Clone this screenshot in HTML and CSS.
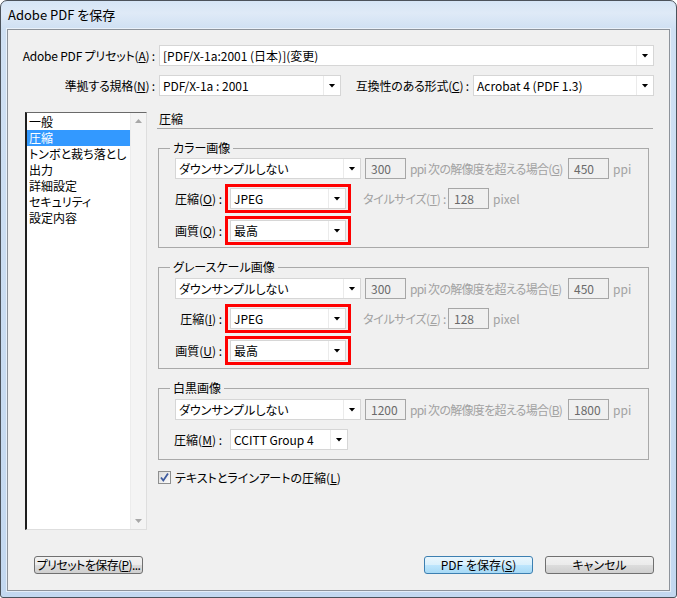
FILE: index.html
```html
<!DOCTYPE html>
<html lang="ja">
<head>
<meta charset="utf-8">
<title>Adobe PDF を保存</title>
<link rel="stylesheet" href="styles.css">
</head>
<body>
<div class="window">
  <div class="titlebar">Adobe PDF を保存</div>
  <div class="panel">
    <div class="trow">
      <div class="tlabel">Adobe PDF プリセット(<u>A</u>) :</div>
      <div class="combo c-preset"><span class="v">[PDF/X-1a:2001 (日本)](変更)</span><span class="a"></span></div>
    </div>
    <div class="trow trow2">
      <div class="tlabel">準拠する規格(<u>N</u>) :</div>
      <div class="combo c-std"><span class="v">PDF/X-1a : 2001</span><span class="a"></span></div>
      <div class="tlabel tlabel2">互換性のある形式(<u>C</u>) :</div>
      <div class="combo c-compat"><span class="v">Acrobat 4 (PDF 1.3)</span><span class="a"></span></div>
    </div>

    <div class="main">
      <div class="list">
        <ul class="items">
          <li>一般</li>
          <li class="sel">圧縮</li>
          <li>トンボと裁ち落とし</li>
          <li>出力</li>
          <li>詳細設定</li>
          <li>セキュリティ</li>
          <li>設定内容</li>
        </ul>
        <div class="sbar"><span class="sarr up"></span><span class="sarr down"></span></div>
      </div>

      <div class="content">
        <div class="chead">圧縮</div>

        <fieldset class="group g-color">
          <legend>カラー画像</legend>
          <div class="gbody">
            <div class="grow">
              <div class="combo c-ds"><span class="v">ダウンサンプルしない</span><span class="a"></span></div>
              <div class="num n1">300</div>
              <div class="dis dtext">ppi 次の解像度を超える場合(<u>G</u>)</div>
              <div class="num">450</div>
              <div class="dis ppi">ppi</div>
            </div>
            <div class="grow r2">
              <div class="glbl">圧縮(<u>O</u>) :</div>
              <div class="red"><div class="combo"><span class="v">JPEG</span><span class="a"></span></div></div>
              <div class="dis tlbl">タイルサイズ(<u>T</u>) :</div>
              <div class="num">128</div>
              <div class="dis ppi">pixel</div>
            </div>
            <div class="grow r3">
              <div class="glbl">画質(<u>Q</u>) :</div>
              <div class="red"><div class="combo"><span class="v">最高</span><span class="a"></span></div></div>
            </div>
          </div>
        </fieldset>

        <fieldset class="group g-gray">
          <legend>グレースケール画像</legend>
          <div class="gbody">
            <div class="grow">
              <div class="combo c-ds"><span class="v">ダウンサンプルしない</span><span class="a"></span></div>
              <div class="num n1">300</div>
              <div class="dis dtext">ppi 次の解像度を超える場合(<u>E</u>)</div>
              <div class="num">450</div>
              <div class="dis ppi">ppi</div>
            </div>
            <div class="grow r2">
              <div class="glbl">圧縮(<u>I</u>) :</div>
              <div class="red"><div class="combo"><span class="v">JPEG</span><span class="a"></span></div></div>
              <div class="dis tlbl">タイルサイズ(<u>Z</u>) :</div>
              <div class="num">128</div>
              <div class="dis ppi">pixel</div>
            </div>
            <div class="grow r3">
              <div class="glbl">画質(<u>U</u>) :</div>
              <div class="red"><div class="combo"><span class="v">最高</span><span class="a"></span></div></div>
            </div>
          </div>
        </fieldset>

        <fieldset class="group g-mono">
          <legend>白黒画像</legend>
          <div class="gbody">
            <div class="grow">
              <div class="combo c-ds"><span class="v">ダウンサンプルしない</span><span class="a"></span></div>
              <div class="num n1">1200</div>
              <div class="dis dtext">ppi 次の解像度を超える場合(<u>B</u>)</div>
              <div class="num">1800</div>
              <div class="dis ppi">ppi</div>
            </div>
            <div class="grow r2m">
              <div class="glbl">圧縮(<u>M</u>) :</div>
              <div class="combo c-mono"><span class="v">CCITT Group 4</span><span class="a"></span></div>
            </div>
          </div>
        </fieldset>

        <div class="chk">
          <span class="box"><svg width="11" height="11" viewBox="0 0 11 11"><path d="M2 5.5 L4.3 8.5 L9 1.5" fill="none" stroke="#3d5a9e" stroke-width="1.8"/></svg></span>
          <span class="ctext">テキストとラインアートの圧縮(<u>L</u>)</span>
        </div>
      </div>
    </div>

    <div class="btns">
      <button class="btn b-preset">プリセットを保存(<u>P</u>)...</button>
      <span class="spacer"></span>
      <button class="btn default">PDF を保存(<u>S</u>)</button>
      <button class="btn b-cancel">キャンセル</button>
    </div>
  </div>
</div>
</body>
</html>
```

FILE: styles.css
```css
html, body {
  margin: 0;
  padding: 0;
  background: #ffffff;
}

body {
  font-family: "Noto Sans CJK JP", "Noto Sans", "Liberation Sans", sans-serif;
  font-size: 12px;
  font-feature-settings: "palt";
  color: #000;
}

u {
  text-decoration: underline;
  text-underline-offset: 1px;
}

.window {
  width: 677px;
  height: 598px;
  box-sizing: border-box;
  border: 1px solid #4b525b;
  border-radius: 7px 7px 3px 3px;
  background: linear-gradient(180deg, #d5e5f6 0px, #dfeaf7 12px, #cfe0f3 28px, #c3d8f0 100%);
  display: flex;
  flex-direction: column;
  overflow: hidden;
}

.titlebar {
  height: 28px;
  line-height: 28px;
  padding-left: 7px;
  font-size: 13px;
  color: #000;
  white-space: nowrap;
}

.panel {
  margin: 0 6px;
  height: 562px;
  box-sizing: border-box;
  border: 1px solid #8d939b;
  box-shadow: 0 0 0 1px rgba(255, 255, 255, 0.55);
  background: #f0f0f0;
  padding: 15px 15px 0 17px;
}

/* top rows */
.trow {
  display: flex;
  align-items: center;
  height: 21px;
}

.trow2 {
  margin-top: 9px;
}

.tlabel {
  width: 134px;
  flex: none;
  display: flex;
  justify-content: flex-end;
  padding-right: 4px;
  box-sizing: border-box;
  white-space: nowrap;
  letter-spacing: -0.2px;
}

.tlabel2 {
  width: 132px;
}

/* combo boxes */
.combo {
  display: flex;
  height: 21px;
  box-sizing: border-box;
  border: 1px solid #d6d6d6;
  background: #fff;
  flex: none;
}

.combo .v {
  flex: 1;
  padding-left: 3px;
  line-height: 19px;
  border-right: 1px solid #ebebeb;
  white-space: nowrap;
  overflow: hidden;
}

.combo .a {
  width: 16px;
  flex: none;
  display: flex;
  align-items: center;
  justify-content: center;
}

.combo .a::after {
  content: "";
  width: 7px;
  height: 4px;
  background: #000;
  clip-path: polygon(0 0, 100% 0, 50% 100%);
}

.c-preset { width: 495px; }
.c-std { width: 182px; }
.c-compat { width: 181px; }
.c-ds { width: 186px; }
.c-mono { width: 118px; margin-left: 5px; }

/* main area */
.main {
  display: flex;
  margin-top: 16px;
  height: 418px;
}

.list {
  width: 122px;
  height: 418px;
  box-sizing: border-box;
  border-style: solid;
  border-width: 1px 1px 1px 2px;
  border-color: #6a6a6a #dedede #dedede #1e1e1e;
  background: #fff;
  display: flex;
  flex: none;
}

.items {
  list-style: none;
  margin: 0;
  padding: 1px 0 0 0;
  flex: 1;
}

.items li {
  height: 16px;
  line-height: 16px;
  padding-left: 2px;
  white-space: nowrap;
  font-size: 12px;
}

.items li.sel {
  background: #3399ff;
  color: #fff;
}

.sbar {
  width: 15px;
  flex: none;
  background: #f4f4f4;
  border-left: 1px solid #ececec;
  display: flex;
  flex-direction: column;
  justify-content: space-between;
}

.sarr {
  height: 16px;
  display: flex;
  align-items: center;
  justify-content: center;
}

.sarr::after {
  content: "";
  width: 7px;
  height: 4px;
  background: #a8a8a8;
}

.sarr.up::after {
  clip-path: polygon(50% 0, 100% 100%, 0 100%);
}

.sarr.down::after {
  clip-path: polygon(0 0, 100% 0, 50% 100%);
}

.content {
  margin-left: 10px;
  width: 496px;
  flex: none;
}

.chead {
  height: 16px;
  line-height: 13px;
  padding-left: 2px;
  border-bottom: 1px solid #a5a5a5;
}

/* groups */
.group {
  margin: 11px 0 0 1px;
  padding: 0;
  width: 491px;
  box-sizing: border-box;
  border: 1px solid #a9a9a9;
  min-width: 0;
}

.g-mono {
  margin-top: 11px;
}

.group legend {
  margin-left: 11px;
  padding: 0 3px;
  line-height: 16px;
  height: 16px;
  font-size: 12px;
}

.gbody {
  padding: 2px 0 2px 16px;
}

.g-gray .gbody {
  padding-top: 3px;
  padding-bottom: 3px;
}

.g-mono .gbody {
  padding: 3px 0 9px 16px;
}

.grow {
  display: flex;
  align-items: center;
  white-space: nowrap;
}

.r2 {
  margin-top: 5px;
}

.r3 {
  margin-top: 3px;
}

.r2m {
  margin-top: 9px;
}

.num {
  width: 41px;
  height: 21px;
  box-sizing: border-box;
  border: 1px solid #a6a6a6;
  background: #f0f0f0;
  color: #6a6a6a;
  padding-left: 5px;
  line-height: 19px;
  flex: none;
}

.n1 {
  margin-left: 4px;
}

.dis {
  color: #a2a2a2;
}

.dtext {
  width: 158px;
  margin-left: 4px;
  flex: none;
  letter-spacing: -0.7px;
  overflow: hidden;
}

.ppi {
  margin-left: 4px;
}

.glbl {
  width: 50px;
  flex: none;
  display: flex;
  justify-content: flex-end;
  padding-right: 3px;
  box-sizing: border-box;
}

.red {
  width: 126px;
  box-sizing: border-box;
  border: 3px solid #ff0000;
  padding: 1px 2px;
  flex: none;
}

.red .combo {
  width: 100%;
}

.tlbl {
  width: 85px;
  margin-left: 12px;
  flex: none;
  letter-spacing: -0.3px;
}

/* checkbox */
.chk {
  display: flex;
  align-items: center;
  margin: 9px 0 0 1px;
  height: 16px;
}

.box {
  width: 13px;
  height: 13px;
  box-sizing: border-box;
  border: 1px solid #8e8f8f;
  background: linear-gradient(135deg, #dcdcdc, #fbfbfb);
  display: flex;
  align-items: center;
  justify-content: center;
}

.ctext {
  margin-left: 4px;
}

/* buttons */
.btns {
  display: flex;
  margin-top: 26px;
  padding-left: 9px;
}

.spacer {
  flex: 1;
}

.btn {
  width: 109px;
  height: 18px;
  box-sizing: border-box;
  border: 1px solid #707070;
  border-radius: 3px;
  background: linear-gradient(180deg, #f2f2f2 0%, #ebebeb 50%, #dddddd 50%, #cfcfcf 100%);
  font-family: inherit;
  font-size: 12px;
  font-feature-settings: "palt";
  line-height: 14px;
  padding: 0;
  color: #000;
  white-space: nowrap;
  overflow: hidden;
}

.b-preset {
  letter-spacing: -0.6px;
}

.btn.default {
  border-color: #3c7fb1;
  background: linear-gradient(180deg, #eaf6fd 0%, #d9f0fc 50%, #bee6fd 50%, #a7d9f5 100%);
}

.b-cancel {
  margin-left: 12px;
}
```
